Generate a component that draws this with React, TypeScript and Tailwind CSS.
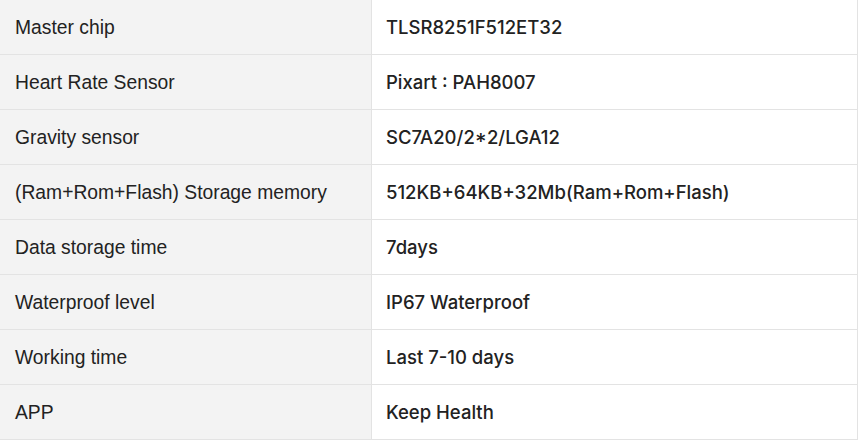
const specs: [string, string][] = [
    ["Master chip", "TLSR8251F512ET32"],
    ["Heart Rate Sensor", "Pixart : PAH8007"],
    ["Gravity sensor", "SC7A20/2*2/LGA12"],
    ["(Ram+Rom+Flash) Storage memory", "512KB+64KB+32Mb(Ram+Rom+Flash)"],
    ["Data storage time", "7days"],
    ["Waterproof level", "IP67 Waterproof"],
    ["Working time", "Last 7-10 days"],
    ["APP", "Keep Health"],
];

const App: React.FC = () => {
    return (
        <div className="w-[860px] h-[441px] bg-white overflow-hidden">
            <div className="w-[858px] flex flex-col">
                {specs.map(([label, value]) => (
                    <div key={label} className="flex h-[55px] border-b border-[#e3e3e3]">
                        <div className="w-[372px] shrink-0 flex items-center pl-[15px] pt-[3px] bg-[#f3f3f3] border-r border-[#e3e3e3] font-['Liberation_Sans',sans-serif] text-[19.3px] text-[#222]">
                            {label}
                        </div>
                        <div className="flex-1 flex items-center pl-[14px] pt-[1px] border-r border-[#e3e3e3] font-['Inter',sans-serif] font-medium text-[18.5px] text-[#222]">
                            {value}
                        </div>
                    </div>
                ))}
            </div>
        </div>
    )
}

export default App;
